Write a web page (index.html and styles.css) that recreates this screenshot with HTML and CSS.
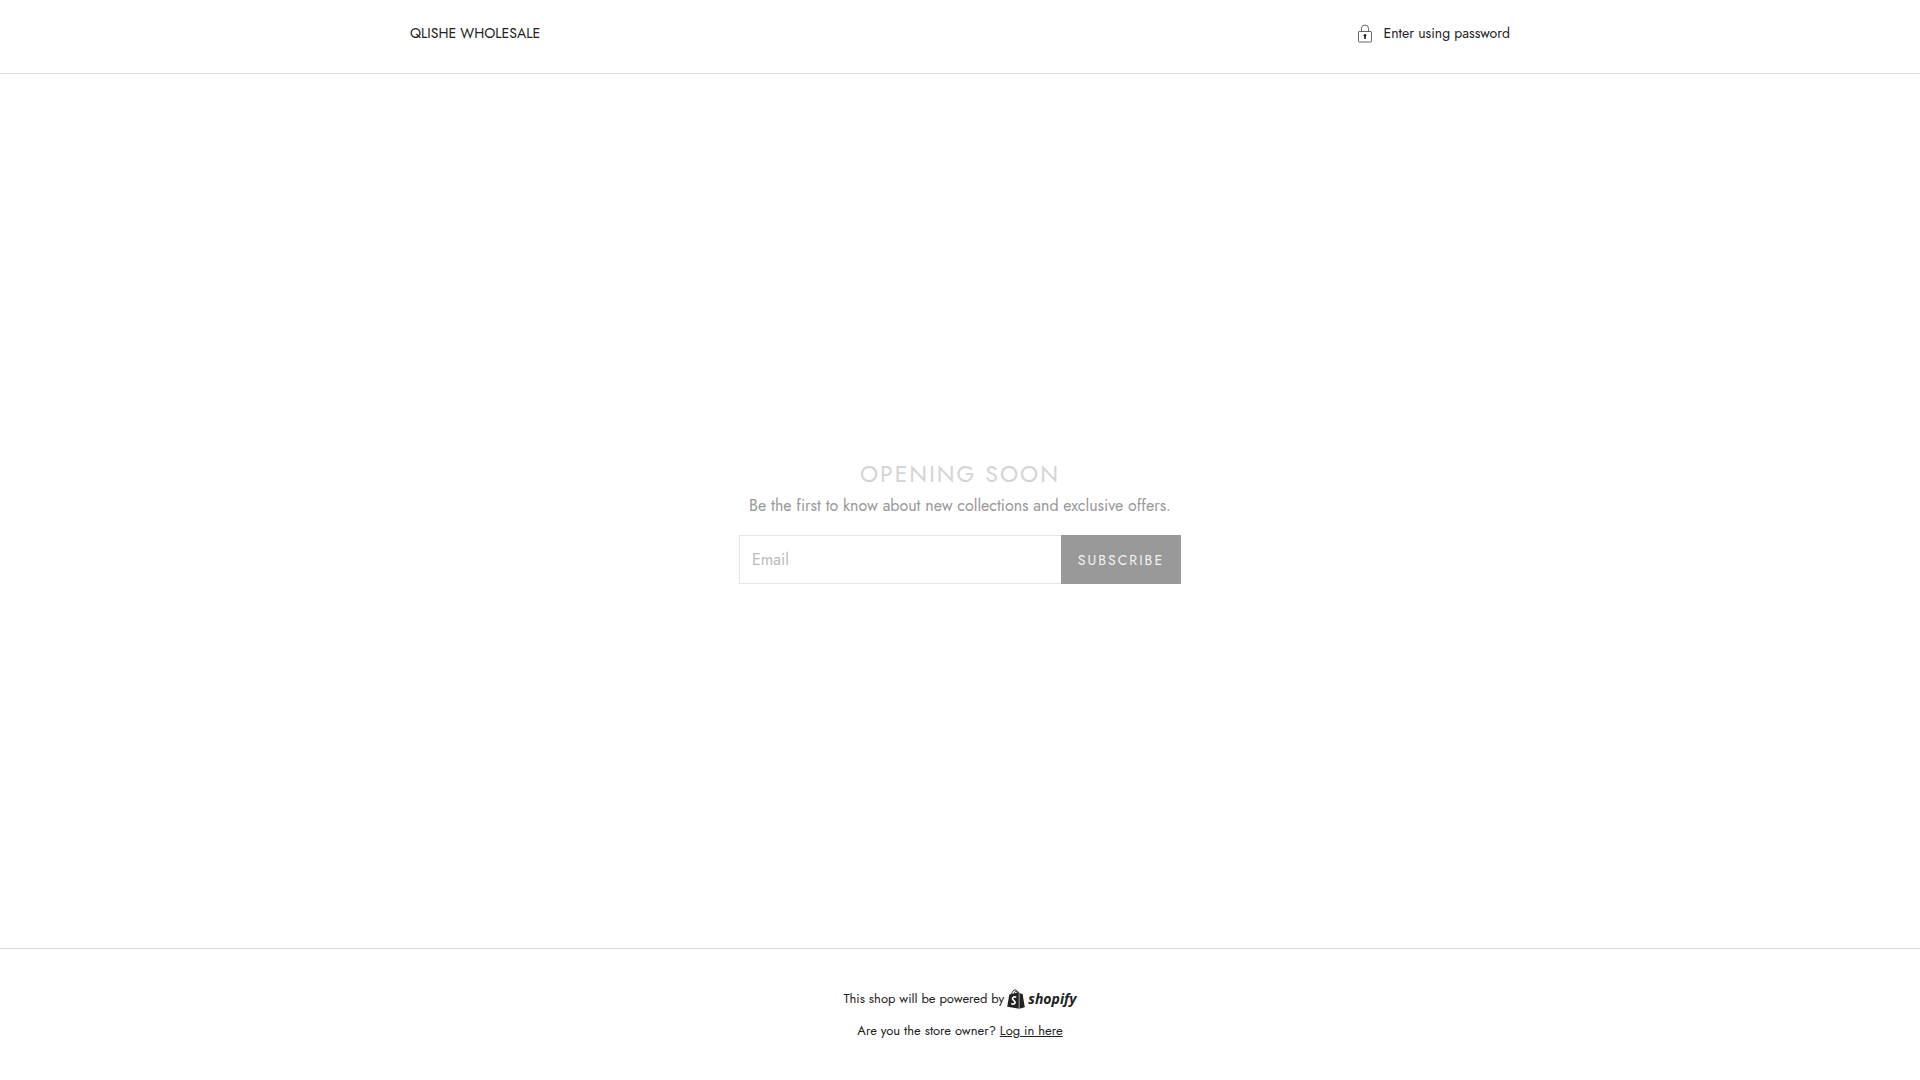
FILE: index.html
```html
<!DOCTYPE html>
<html lang="en">
<head>
<meta charset="utf-8">
<meta name="viewport" content="width=device-width, initial-scale=1">
<title>QLISHE WHOLESALE</title>
<link rel="stylesheet" href="styles.css">
</head>
<body>
<header class="site-header">
  <div class="container">
    <span class="shop-name">QLISHE WHOLESALE</span>
    <a class="password-link" href="#password">
      <svg class="lock-icon" viewBox="0 0 16 20" aria-hidden="true">
        <g fill="none" stroke="#666">
          <rect x="1.5" y="8.500" width="13" height="10.500" rx=".6"/>
          <path d="M4.500 8.500V5.500a3.500 3.500 0 0 1 7 0v3"/>
        </g>
        <path fill="#222" d="M8 11a1.500 1.500 0 0 0-.8 2.700V16h1.600V13.700A1.500 1.500 0 0 0 8 11z"/>
      </svg>
      <span>Enter using password</span>
    </a>
  </div>
</header>
<main class="main">
  <section class="signup">
    <h1 class="title">Opening soon</h1>
    <p class="lead">Be the first to know about new collections and exclusive offers.</p>
    <form class="form">
      <input class="email" type="email" placeholder="Email" aria-label="Email">
      <button class="subscribe" type="submit">Subscribe</button>
    </form>
  </section>
</main>
<footer class="site-footer">
  <p class="powered">This shop will be powered by
    <a class="shopify" href="#shopify">
      <svg class="bag" viewBox="0 0 18 20" aria-hidden="true">
        <path fill="none" stroke="#222" stroke-width=".9" d="M4.500 5.500C5 2.500 6.700.8 8.200.9c1.400.1 2 1.800 2 3.800M7 5c.4-2 1.700-3.300 2.800-3.100 1.100.1 1.700 1.300 1.800 2.400"/>
        <path fill="#222" d="M2.300 5.600 11.800 3.200V19.700L.2 17.800z"/>
        <path fill="#222" d="M12.400 3.400 13.600 4.600 15.600 4.900 17.800 18.300 12.400 19.700z"/>
        <path fill="none" stroke="#fff" stroke-width="1.700" d="M9.200 8.300C7.500 7.500 5.500 8 5.500 9.600c0 1.700 2.700 1.900 2.600 3.900-.1 1.800-2 2-3.800.9"/>
      </svg>
      <span>shopify</span>
    </a>
  </p>
  <p class="owner">Are you the store owner? <a href="#login">Log in here</a></p>
</footer>
</body>
</html>
```
FILE: styles.css
```css
* { box-sizing: border-box; }

body {
  margin: 0;
  min-height: 100vh;
  display: flex;
  flex-direction: column;
  background: #fff;
  color: #222;
  font-family: Jost, Lato, sans-serif;
  font-size: 14px;
  line-height: 20px;
}

h1, p { margin: 0; }
a { color: inherit; }

.site-header {
  padding: 23px 24px 30px;
  border-bottom: 1px solid #dcdcdc;
}

.container {
  max-width: 1100px;
  margin: 0 auto;
  display: flex;
  justify-content: space-between;
  align-items: center;
}

.password-link {
  display: flex;
  align-items: center;
  gap: 11px;
  text-decoration: none;
}

.lock-icon { width: 16px; height: 20px; }

.main {
  flex: 1;
  display: flex;
  align-items: center;
  justify-content: center;
  padding: 24px;
}

.signup {
  width: 100%;
  max-width: 442px;
  padding-top: 19px;
  text-align: center;
}

.title {
  color: #d4d4d4;
  font-size: 23px;
  line-height: 34px;
  font-weight: 400;
  letter-spacing: 2px;
  text-transform: uppercase;
}

.lead {
  margin-bottom: 14px;
  color: #999;
  font-size: 16px;
  line-height: 30px;
}

.form {
  display: flex;
  height: 49px;
}

.email {
  flex: 1;
  min-width: 0;
  padding: 0 12px;
  border: 1px solid #e6e6e6;
  border-right: 0;
  border-radius: 0;
  background: #fff;
  font: inherit;
  font-size: 16px;
}

.email::placeholder { color: #bbb; opacity: 1; }

.subscribe {
  width: 120px;
  padding: 0;
  border: 0;
  background: #999;
  color: #f2f2f2;
  font: inherit;
  letter-spacing: 2px;
  text-transform: uppercase;
}

.site-footer {
  padding: 40px 24px 39px;
  border-top: 1px solid #dcdcdc;
  text-align: center;
  font-size: 13px;
}

.powered {
  display: flex;
  justify-content: center;
  align-items: center;
  gap: 3px;
  margin-bottom: 12px;
}

.shopify {
  display: flex;
  align-items: center;
  gap: 3px;
  font: italic 700 14px/20px "Open Sans", sans-serif;
  text-decoration: none;
}

.bag { width: 18px; height: 20px; }
```
